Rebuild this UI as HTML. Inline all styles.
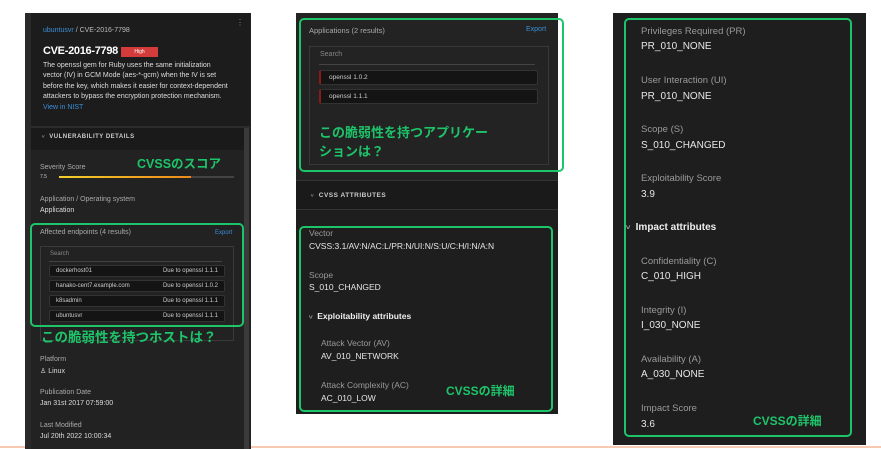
<!DOCTYPE html>
<html><head><meta charset="utf-8"><style>
*{margin:0;padding:0;box-sizing:border-box}
body{width:881px;height:449px;background:#fff;position:relative;overflow:hidden;font-family:"Liberation Sans","Noto Sans CJK JP",sans-serif;color:#ddd}
.a{position:absolute;white-space:nowrap}
.p{position:absolute;background:#1e1e1e}
.g{position:absolute;border:2.5px solid #1ec46a;border-radius:5px}
.gt{position:absolute;color:#1ec46a;font-weight:bold;white-space:nowrap;font-family:"Liberation Sans","Noto Sans CJK JP",sans-serif}
.lb{color:#9a9a9a;font-size:9.5px}
.v{color:#e6e6e6;font-size:10px}
.s{font-size:7px}
.row{position:absolute;background:#141414;border:1px solid #333;border-radius:2px;font-size:6px;color:#ccc;height:12px;line-height:10px;padding:0 6px}
.ch{display:inline-block;font-size:0.7em;color:#999;transform:scaleX(1.2)}
</style></head><body>
<div class="a" style="left:0;top:446px;width:881px;height:2px;background:#f8c9b4"></div>

<!-- Panel 1 -->
<div class="p" style="left:25px;top:13px;width:226px;height:436px;background:#222"></div>
<div class="p" style="left:25px;top:13px;width:6px;height:436px;background:#2a2a2a"></div>
<div class="p" style="left:31px;top:13px;width:219px;height:113px;background:#1c1c1c"></div>
<div class="p" style="left:31px;top:126px;width:219px;height:2px;background:#2c2c2c"></div>
<div class="p" style="left:31px;top:128px;width:213px;height:22px;background:#1a1a1a"></div>
<div class="p" style="left:244px;top:128px;width:5px;height:321px;background:#3a3a3a"></div>
<div class="a" style="left:236px;top:18px;font-size:8px;color:#888">⋮</div>
<div class="a s" style="left:43px;top:27px;color:#bbb"><span style="color:#3a8fd8">ubuntusvr</span> / CVE-2016-7798</div>
<div class="a" style="left:43px;top:45px;font-size:11px;letter-spacing:-0.3px;font-weight:bold;color:#fff">CVE-2016-7798</div>
<div class="a" style="left:121px;top:47px;width:37px;height:10px;background:#d43c3c;font-size:5px;color:#fff;text-align:center;line-height:10px">High</div>
<div class="a s" style="left:43px;top:61px;line-height:10.3px;color:#ddd">The openssl gem for Ruby uses the same initialization<br>vector (IV) in GCM Mode (aes-*-gcm) when the IV is set<br>before the key, which makes it easier for context-dependent<br>attackers to bypass the encryption protection mechanism.</div>
<div class="a s" style="left:43px;top:104px;color:#3a8fd8">View in NIST</div>
<div class="a" style="left:42px;top:134px;font-size:6px;font-weight:bold;letter-spacing:.5px;color:#ccc"><span class="ch">˅</span>&nbsp;&nbsp;VULNERABILITY DETAILS</div>
<div class="gt" style="left:137px;top:153px;font-size:12.5px">CVSSのスコア</div>
<div class="a s" style="left:40px;top:164px;color:#aaa">Severity Score</div>
<div class="a" style="left:40px;top:174px;font-size:5px;color:#ccc">7.5</div>
<div class="a" style="left:59px;top:176px;width:175px;height:2px;background:#444"></div>
<div class="a" style="left:59px;top:176px;width:132px;height:2px;background:linear-gradient(90deg,#f2d02a,#f08a1a)"></div>
<div class="a s" style="left:40px;top:196px;color:#aaa">Application / Operating system</div>
<div class="a s" style="left:40px;top:207px;color:#ddd">Application</div>
<div class="a s" style="left:40px;top:229px;color:#aaa">Affected endpoints (4 results)</div>
<div class="a" style="left:215px;top:230px;font-size:6px;color:#3a8fd8">Export</div>
<div class="a" style="left:40px;top:246px;width:194px;height:95px;border:1px solid #3a3a3a"></div>
<div class="a" style="left:50px;top:251px;font-size:6px;color:#888">Search</div>
<div class="a" style="left:49px;top:261px;width:173px;height:1px;background:#444"></div>
<div class="row" style="left:49px;top:265px;width:176px">dockerhost01<span style="float:right">Due to openssl 1.1.1</span></div>
<div class="row" style="left:49px;top:280px;width:176px">hanako-cent7.example.com<span style="float:right">Due to openssl 1.0.2</span></div>
<div class="row" style="left:49px;top:295px;width:176px">k8sadmin<span style="float:right">Due to openssl 1.1.1</span></div>
<div class="row" style="left:49px;top:310px;width:176px">ubuntusvr<span style="float:right">Due to openssl 1.1.1</span></div>
<div class="g" style="left:30px;top:223px;width:214px;height:104px"></div>
<div class="gt" style="left:41px;top:326px;font-size:13.5px">この脆弱性を持つホストは？</div>
<div class="a s" style="left:40px;top:356px;color:#aaa">Platform</div>
<div class="a s" style="left:40px;top:367px;color:#ddd">♙ Linux</div>
<div class="a s" style="left:40px;top:389px;color:#aaa">Publication Date</div>
<div class="a s" style="left:40px;top:400px;color:#ddd">Jan 31st 2017 07:59:00</div>
<div class="a s" style="left:40px;top:422px;color:#aaa">Last Modified</div>
<div class="a s" style="left:40px;top:433px;color:#ddd">Jul 20th 2022 10:00:34</div>

<!-- Panel 2 -->
<div class="p" style="left:296px;top:13px;width:262px;height:401px;background:#1e1e1e"></div>
<div class="p" style="left:296px;top:13px;width:262px;height:167px;background:#232323"></div>
<div class="p" style="left:296px;top:180px;width:262px;height:30px;background:#1a1a1a;border-top:1px solid #333;border-bottom:1px solid #333"></div>
<div class="a s" style="left:309px;top:26px;color:#aaa;font-size:7.5px">Applications (2 results)</div>
<div class="a" style="left:526px;top:26px;font-size:7px;color:#3a8fd8">Export</div>
<div class="a" style="left:309px;top:46px;width:240px;height:119px;border:1px solid #383838"></div>
<div class="a" style="left:320px;top:51px;font-size:7px;color:#888">Search</div>
<div class="a" style="left:319px;top:64px;width:216px;height:1px;background:#444"></div>
<div class="row" style="left:319px;top:70px;width:219px;height:15px;line-height:13px;font-size:6.5px;border-left:2px solid #8a1a1a;padding-left:8px">openssl 1.0.2</div>
<div class="row" style="left:319px;top:89px;width:219px;height:15px;line-height:13px;font-size:6.5px;border-left:2px solid #8a1a1a;padding-left:8px">openssl 1.1.1</div>
<div class="g" style="left:299px;top:18px;width:265px;height:154px"></div>
<div class="gt" style="left:319px;top:123px;font-size:13px;line-height:19px">この脆弱性を持つアプリケー<br>ションは？</div>
<div class="a" style="left:311px;top:192px;font-size:6.5px;font-weight:bold;letter-spacing:.5px;color:#ccc"><span class="ch">˅</span>&nbsp;&nbsp;CVSS ATTRIBUTES</div>
<div class="a lb" style="left:309px;top:228px;font-size:8.5px">Vector</div>
<div class="a v" style="left:309px;top:241px;font-size:8.5px">CVSS:3.1/AV:N/AC:L/PR:N/UI:N/S:U/C:H/I:N/A:N</div>
<div class="a lb" style="left:309px;top:270px;font-size:8.5px">Scope</div>
<div class="a v" style="left:309px;top:282px;font-size:8.5px">S_010_CHANGED</div>
<div class="a" style="left:309px;top:311px;font-size:8.5px;font-weight:bold;color:#eee"><span class="ch">˅</span>&nbsp; Exploitability attributes</div>
<div class="a lb" style="left:321px;top:338px;font-size:8.5px">Attack Vector (AV)</div>
<div class="a v" style="left:321px;top:351px;font-size:8.5px">AV_010_NETWORK</div>
<div class="a lb" style="left:321px;top:380px;font-size:8.5px">Attack Complexity (AC)</div>
<div class="a v" style="left:321px;top:393px;font-size:8.5px">AC_010_LOW</div>
<div class="gt" style="left:446px;top:382px;font-size:12px">CVSSの詳細</div>
<div class="g" style="left:299px;top:226px;width:254px;height:186px"></div>

<!-- Panel 3 -->
<div class="p" style="left:613px;top:13px;width:253px;height:432px;background:#1e1e1e"></div>
<div class="g" style="left:624px;top:18px;width:228px;height:419px"></div>
<div class="a lb" style="left:641px;top:26px">Privileges Required (PR)</div>
<div class="a v" style="left:641px;top:41px">PR_010_NONE</div>
<div class="a lb" style="left:641px;top:75px">User Interaction (UI)</div>
<div class="a v" style="left:641px;top:91px">PR_010_NONE</div>
<div class="a lb" style="left:641px;top:124px">Scope (S)</div>
<div class="a v" style="left:641px;top:140px">S_010_CHANGED</div>
<div class="a lb" style="left:641px;top:173px">Exploitability Score</div>
<div class="a v" style="left:641px;top:189px">3.9</div>
<div class="a" style="left:626px;top:222px;font-size:10px;font-weight:bold;color:#eee"><span class="ch">˅</span>&nbsp; Impact attributes</div>
<div class="a lb" style="left:641px;top:256px">Confidentiality (C)</div>
<div class="a v" style="left:641px;top:271px">C_010_HIGH</div>
<div class="a lb" style="left:641px;top:305px">Integrity (I)</div>
<div class="a v" style="left:641px;top:320px">I_030_NONE</div>
<div class="a lb" style="left:641px;top:354px">Availability (A)</div>
<div class="a v" style="left:641px;top:369px">A_030_NONE</div>
<div class="a lb" style="left:641px;top:403px">Impact Score</div>
<div class="a v" style="left:641px;top:419px">3.6</div>
<div class="gt" style="left:753px;top:412px;font-size:12px">CVSSの詳細</div>
</body></html>
